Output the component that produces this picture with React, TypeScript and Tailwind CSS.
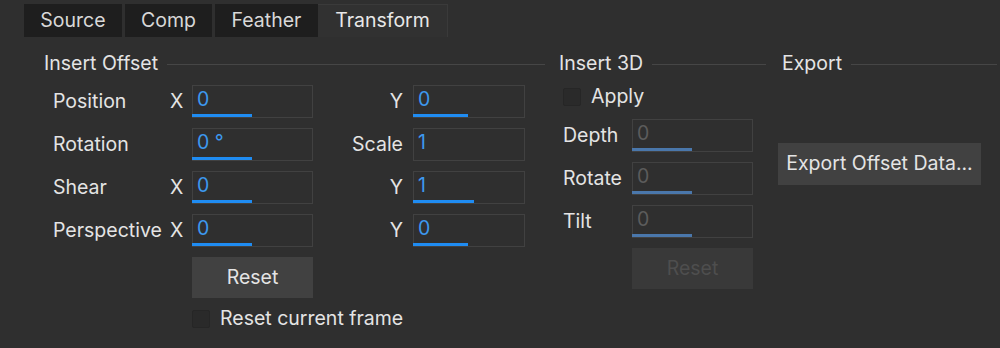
import type { ReactNode } from 'react';

// Field box with an optional slider-ish underline along its bottom edge.
function Field({
  value,
  bar,
  wide = true,
  disabled = false,
}: {
  value: string;
  bar?: number;
  wide?: boolean;
  disabled?: boolean;
}) {
  return (
    <div
      className={`relative flex h-[33px] items-center border border-[#414141] pb-[3px] pl-[4px] ${
        wide ? 'w-[121px]' : 'w-[112px]'
      }`}
    >
      <span className={disabled ? 'text-[#5c5c5c]' : 'text-[#3d98ee]'}>{value}</span>
      {bar !== undefined && (
        <div
          className={`absolute bottom-0 left-[-1px] h-[3px] ${disabled ? 'bg-[#4a77ab]' : 'bg-[#1f8cf2]'}`}
          style={{ width: bar }}
        />
      )}
    </div>
  );
}

function Header({ title, className = '' }: { title: string; className?: string }) {
  return (
    <div className={`flex h-[24px] items-center gap-[9px] ${className}`}>
      <span className="text-[#e4e4e4]">{title}</span>
      <div className="h-px flex-1 bg-[#464646]" />
    </div>
  );
}

function Check({ label }: { label: string }) {
  return (
    <div className="flex h-[18px] items-center gap-[10px]">
      <div className="h-[18px] w-[18px] rounded-[2px] border border-[#262626] bg-[#2a2a2a]" />
      <span className="text-[#e4e4e4]">{label}</span>
    </div>
  );
}

function Row({ children }: { children: ReactNode }) {
  return <div className="flex h-[33px] items-center">{children}</div>;
}

const tabs = ['Source', 'Comp', 'Feather'];
const tabW = ['w-[98px]', 'w-[87px]', 'w-[103px]'];

export default function App() {
  return (
    <div className="h-[348px] w-[1000px] overflow-hidden bg-[#2f2f2f] font-['Inter',sans-serif] text-[19.5px] text-[#e4e4e4]">
      {/* tab strip */}
      <div className="flex gap-[3px] pl-[24px] pt-[4px]">
        {tabs.map((t, i) => (
          <div
            key={t}
            className={`flex h-[33px] items-center justify-center bg-[#1e1e1e] text-[#d8d8d8] ${tabW[i]}`}
          >
            {t}
          </div>
        ))}
        <div className="ml-[-3px] flex h-[33px] w-[130px] items-center justify-center border-r border-t border-[#3a3a3a] bg-[#313131] text-[#e8e8e8]">
          Transform
        </div>
      </div>

      <div className="mt-[15px] flex pl-[44px]">
        {/* Insert Offset */}
        <div className="w-[501px]">
          <Header title="Insert Offset" />
          <div className="mt-[9px] flex flex-col gap-[10px] pl-[9px]">
            <Row>
              <span className="w-[117px]">Position</span>
              <span className="w-[22px]">X</span>
              <Field value="0" bar={60} />
              <span className="w-[100px] pr-[10px] text-right">Y</span>
              <Field value="0" bar={55} wide={false} />
            </Row>
            <Row>
              <span className="w-[139px]">Rotation</span>
              <Field value="0 °" bar={60} />
              <span className="w-[100px] pr-[10px] text-right">Scale</span>
              <Field value="1" wide={false} />
            </Row>
            <Row>
              <span className="w-[117px]">Shear</span>
              <span className="w-[22px]">X</span>
              <Field value="0" bar={60} />
              <span className="w-[100px] pr-[10px] text-right">Y</span>
              <Field value="1" bar={61} wide={false} />
            </Row>
            <Row>
              <span className="w-[117px]">Perspective</span>
              <span className="w-[22px]">X</span>
              <Field value="0" bar={60} />
              <span className="w-[100px] pr-[10px] text-right">Y</span>
              <Field value="0" bar={55} wide={false} />
            </Row>
            <div className="ml-[139px] flex h-[41px] w-[121px] items-center justify-center bg-[#414141]">
              Reset
            </div>
            <div className="ml-[139px] mt-[2px]">
              <Check label="Reset current frame" />
            </div>
          </div>
        </div>

        {/* Insert 3D */}
        <div className="ml-[14px] w-[207px]">
          <Header title="Insert 3D" />
          <div className="mt-[12px] pl-[4px]">
            <Check label="Apply" />
            <div className="mt-[13px] flex flex-col gap-[10px]">
              {['Depth', 'Rotate', 'Tilt'].map((l) => (
                <Row key={l}>
                  <span className="w-[69px]">{l}</span>
                  <Field value="0" bar={60} disabled />
                </Row>
              ))}
              <div className="ml-[69px] flex h-[41px] w-[121px] items-center justify-center bg-[#393939] text-[#4e4e4e]">
                Reset
              </div>
            </div>
          </div>
        </div>

        {/* Export */}
        <div className="ml-[12px] w-[219px]">
          <Header title="Export" className="pl-[4px]" />
          <div className="mt-[67px] flex h-[42px] w-[203px] items-center justify-center bg-[#414141]">
            Export Offset Data...
          </div>
        </div>
      </div>
    </div>
  );
}
